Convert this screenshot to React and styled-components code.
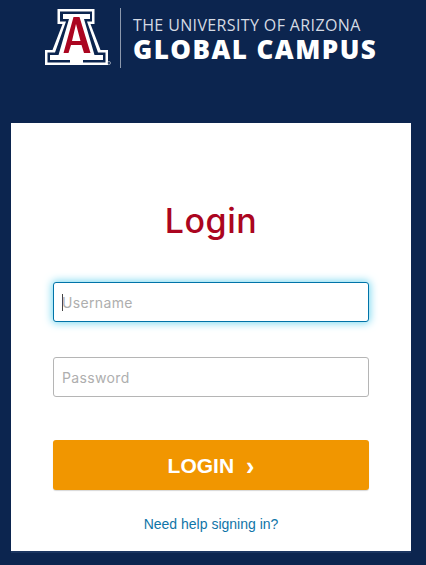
import React from 'react';
import styled, { createGlobalStyle } from 'styled-components';

const GlobalStyle = createGlobalStyle`
  html, body {
    margin: 0;
    padding: 0;
    background: #0c254f;
  }
`;

const Page = styled.div`
  width: 426px;
  height: 565px;
  overflow: hidden;
  background: #0c254f;
  box-sizing: border-box;
  padding: 8px 15px 0 11px;
`;

const Header = styled.header`
  height: 115px;
  display: flex;
  align-items: flex-start;
  padding-left: 34px;
`;

const Divider = styled.div`
  width: 1px;
  height: 60px;
  background: #8d99ad;
  margin: 0 12px 0 9px;
`;

const Wordmark = styled.div`
  display: flex;
  flex-direction: column;
  color: #fff;
  font-family: "Open Sans", sans-serif;
  white-space: nowrap;
`;

const WordmarkTop = styled.span`
  font-size: 16px;
  line-height: 20px;
  margin-top: 7px;
  color: #d5dae3;
  letter-spacing: 0.37px;
`;

const WordmarkBottom = styled.span`
  font-size: 26px;
  line-height: 30px;
  margin-top: -1px;
  font-weight: 800;
  letter-spacing: 1.45px;
`;

const Card = styled.main`
  width: 400px;
  height: 430px;
  box-sizing: border-box;
  background: #fff;
  border-bottom: 2px solid #1b3560;
  padding: 76px 42px 0;
  display: flex;
  flex-direction: column;
`;

const Title = styled.h1`
  margin: 0 0 39px;
  text-align: center;
  color: #ab0520;
  font-family: Inter, sans-serif;
  font-weight: 500;
  font-size: 34px;
  line-height: 44px;
  letter-spacing: 0.5px;
`;

const Field = styled.div`
  height: 40px;
  box-sizing: border-box;
  margin-bottom: ${props => props.$gap}px;
  padding-left: 8px;
  display: flex;
  align-items: center;
  background: #fff;
  border-radius: 3px;
  border: 1px solid ${props => (props.$focused ? '#0073a8' : '#b5b5b5')};
  box-shadow: ${props => (props.$focused ? '0 0 8px 1px #74d7f0' : 'none')};
  color: #aeaeae;
  font-family: Inter, sans-serif;
  font-size: 14px;
  letter-spacing: 0.35px;
`;

const Caret = styled.span`
  width: 1px;
  height: 17px;
  background: #444;
  margin-right: -1px;
`;

const LoginButton = styled.button`
  height: 50px;
  border: 0;
  border-radius: 3px;
  background: #f19600;
  box-shadow: 0 1px 1px #d8d8d8;
  color: #fff;
  display: flex;
  align-items: center;
  justify-content: center;
  gap: 12px;
  font-family: "Liberation Sans", Arial, sans-serif;
  font-size: 21px;
  font-weight: 700;
  padding: 2px 0 0;
`;

const Chevron = styled.span`
  font-size: 25px;
  line-height: 24px;
`;

const HelpLink = styled.a`
  margin-top: 26px;
  text-align: center;
  color: #0f75a8;
  font-family: "Liberation Sans", Arial, sans-serif;
  font-size: 14px;
  line-height: 16px;
  text-decoration: none;
`;

const ArizonaMark = () => (
  <svg width="66" height="60" viewBox="45 8 66 60">
    <path fill="#fff" d="M57.500 9H94.500V24H90.500L100.500 50H108V65H45V50H52.500L62.500 24H57.500Z" />
    <path
      fill="#0c254f"
      d="M60 11.500H92V21.500H87L98 52.500H105.500V62.500H47.500V52.500H55L66 21.500H60Z"
    />
    <path
      fill="#fff"
      d="M63 14H90V19H84L94.500 55H103V60H83V65H70V60H50V55H58.500L69 19H63Z"
    />
    <path
      fill="#ab0520"
      fillRule="evenodd"
      d="M73.500 17H79.500L90.500 53H84L81.500 45H71L68.500 53H63.500ZM76 24L72 41H80.500Z"
    />
    <circle cx="109" cy="63" r="1.500" fill="none" stroke="#c3cad6" strokeWidth="0.7" />
  </svg>
);

export default function App() {
  return (
    <Page>
      <GlobalStyle />
      <Header>
        <ArizonaMark />
        <Divider />
        <Wordmark>
          <WordmarkTop>THE UNIVERSITY OF ARIZONA</WordmarkTop>
          <WordmarkBottom>GLOBAL CAMPUS</WordmarkBottom>
        </Wordmark>
      </Header>
      <Card>
        <Title>Login</Title>
        <Field $focused $gap={35}>
          <Caret />
          Username
        </Field>
        <Field $gap={43}>Password</Field>
        <LoginButton>
          <span>LOGIN</span>
          <Chevron>›</Chevron>
        </LoginButton>
        <HelpLink href="#">Need help signing in?</HelpLink>
      </Card>
    </Page>
  );
}
